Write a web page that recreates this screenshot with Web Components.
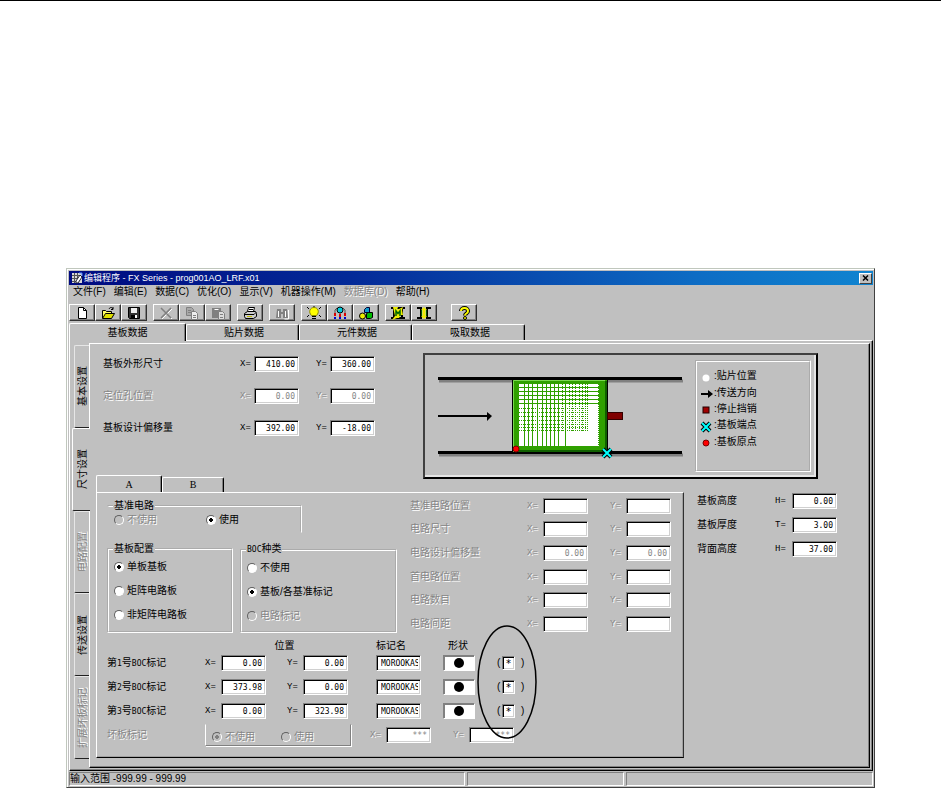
<!DOCTYPE html>
<html lang="zh-CN">
<head>
<meta charset="utf-8">
<title>编辑程序 - FX Series</title>
<style>
  :root {
    --face: #c0c0c0; --dim: #868686; --dark: #404040;
    --text-font: "Liberation Sans", "Noto Sans CJK SC", sans-serif;
    --mono-font: "DejaVu Sans Mono", monospace;
  }
  body { margin: 0; background: #fff; color: #000; font: 10px/12px var(--text-font); }
</style>
</head>
<body>
<manual-page>
  <app-window caption="编辑程序 - FX Series - prog001AO_LRF.x01">
    <menu-bar slot="menu" items="文件(F)|编辑(E)|数据(C)|优化(O)|显示(V)|机器操作(M)|!数据库(D)|帮助(H)"></menu-bar>
    <tool-bar slot="tools"></tool-bar>
    <tab-strip slot="tabs" items="基板数据|贴片数据|元件数据|吸取数据"></tab-strip>
    <side-tabs slot="side" items="基本设置|尺寸设置|!电路配置|传送设置|!扩展坏板标记"></side-tabs>
    <size-panel>
      <xy-rows slot="outline" rows="基板外形尺寸,410.00,360.00|!定位孔位置,0.00,0.00|基板设计偏移量,392.00,-18.00"></xy-rows>
      <board-diagram slot="diagram"></board-diagram>
      <tab-strip slot="subtabs" small items="A|B"></tab-strip>
      <circuit-sheet slot="sheet">
        <group-box slot="base" caption="基准电路" open><radio-set row name="基准电路" options="!不使用|*使用"></radio-set></group-box>
        <group-box slot="layout" caption="基板配置"><radio-set name="基板配置" options="*单板基板|矩阵电路板|非矩阵电路板"></radio-set></group-box>
        <group-box slot="boc" caption="BOC种类"><radio-set name="BOC种类" options="不使用|*基板/各基准标记|!电路标记"></radio-set></group-box>
        <xy-rows slot="circuit" tight rows="!基准电路位置,,|!电路尺寸,,|!电路设计偏移量,0.00,0.00|!首电路位置,,|!电路数目,,|!电路间距,,"></xy-rows>
        <mark-table slot="marks"></mark-table>
      </circuit-sheet>
      <height-list slot="heights"></height-list>
    </size-panel>
    <status-bar slot="status">输入范围 -999.99 - 999.99</status-bar>
  </app-window>
</manual-page>

<script>
const parse = s => s.split('|').map(t => {
  const off = t[0] === '!', on = t[0] === '*';
  return { off, on, text: off || on ? t.slice(1) : t };
});
const narrow = t => t.replace(/\w+/g, '<small>$&</small>');
const BASE = `<style>
  :host, *, *::before, *::after { box-sizing: border-box; }
  button, input { font: inherit; color: inherit; margin: 0; }
  button { background: none; border: 0; padding: 0; white-space: nowrap; }
  small { font-family: var(--mono-font); font-size: 8px; }
  .off { color: var(--dim); text-shadow: 1px 1px 0 #fff; }
</style>`;
function define(name, render) {
  customElements.define(name, class extends HTMLElement {
    constructor() { super(); this.attachShadow({ mode: 'open' }); }
    connectedCallback() { this.shadowRoot.innerHTML = BASE + render(this); }
  });
}

define('manual-page', () => `<style>
  :host { display: block; border-top: 1px solid #000; padding: 267px 66px 0; }
</style><slot></slot>`);

define('app-window', el => `<style>
  :host { display: block; background: var(--face); border: 1px solid; border-color: #c0c7bd var(--dark) var(--dark) #c0c7bd;
    box-shadow: inset 1px 1px 0 #fff; padding: 2px 1px 1px 2px; }
  header { display: flex; align-items: center; height: 14px; padding: 0 1px 0 2px; color: #fff; gap: 1px;
    background: linear-gradient(90deg, #000a80, #042a98 35%, #0d6cc4 78%, #1084d0); }
  h1 { flex: 1; margin: 0; font-weight: 400; font-size: 9px; line-height: 14px; white-space: nowrap; }
  header svg { display: block; }
  header button { width: 13px; height: 11px; background: var(--face); border: 1px solid; border-color: #fff #404040 #404040 #fff; display: grid; place-items: center; }
  .body { border: 1px solid; border-color: #fff #000 #000 #fff; box-shadow: inset -1px -1px 0 #808080;
    padding: 2px 2px 2px 0; display: flex; }
  main { flex: 1; min-width: 0; }
</style>
<header>
  <svg width="12" height="12" viewBox="0 0 12 12"><rect x="1" y="1" width="10" height="10" fill="#d8d8d8"/><path d="M1 3.500h8M1 6.500h8M1 9.500h5M3.500 1v10M6.500 1v9" stroke="#555"/><path d="M9 3l2 2-4 6H5V9z" fill="#fff" stroke="#223"/><path d="M8 1h3v3" stroke="#58f" fill="none"/></svg>
  <h1>${el.getAttribute('caption')}</h1>
  <button aria-label="关闭"><svg width="7" height="6" viewBox="0 0 7 6"><path d="M1 .5l5 5M6 .5l-5 5" stroke="#000" stroke-width="1.500"/></svg></button>
</header>
<slot name="menu"></slot><slot name="tools"></slot><slot name="tabs"></slot>
<div class="body"><slot name="side"></slot><main><slot></slot></main></div>
<slot name="status"></slot>`);

define('menu-bar', el => `<style>
  :host { display: block; }
  nav { display: flex; height: 14px; padding-left: 4px; gap: 8px; }
</style><nav>${parse(el.getAttribute('items')).map(i => `<button class="${i.off ? 'off' : ''}" ${i.off ? 'disabled' : ''}>${i.text}</button>`).join('')}</nav>`);

const ICONS = {
  新建: '<path d="M4.500 1.500h5l3 3v8h-8z" fill="#fff" stroke="#000"/><path d="M9.500 1.500v3h3" fill="none" stroke="#000"/>',
  打开: '<path d="M2.500 12V4.500h3l1 1h5V8" fill="#ff6" stroke="#000"/><path d="M2.500 12.500l3-5h9l-3 5z" fill="#e0e000" stroke="#000"/><path d="M9 3c1-2 3-2 4 0m0-2v2.500h-2" fill="none" stroke="#000"/>',
  保存: '<path d="M2.500 1.500h11v11h-10l-1-1z" fill="#333" stroke="#000"/><rect x="5" y="2" width="6" height="5" fill="#eee"/><rect x="5" y="9" width="6" height="3" fill="#000"/><rect x="9" y="9" width="2" height="3" fill="#fff"/>',
  '!删除': '<path d="M4 3l10 10M14 3L4 13" stroke="#fff"/><path d="M3 2l10 10M13 2L3 12" stroke="#808080" stroke-width="1.500"/>',
  '!复制': '<path d="M2.500 1.500h5l2 2v6h-7z" fill="#a8a8a8" stroke="#808080"/><path d="M7.500 5.500h4l2 2v6h-6z" fill="#eee" stroke="#808080"/><path d="M4 4.500h3M4 6.500h3M9 9.500h3M9 11.500h3" stroke="#808080"/>',
  '!粘贴': '<path d="M2 2h9v10H2z" fill="#808080"/><path d="M4.500 3.500h4" stroke="#fff"/><path d="M8.500 5.500h4l2 2v6h-6z" fill="#ddd" stroke="#808080"/><path d="M10 8.500h3M10 11.500h3" stroke="#808080"/>',
  打印: '<path d="M5.500 5.500l1-4h6l-1 4" fill="#fff" stroke="#000"/><path d="M2.500 7.500l3-2h8l1 2v3l-3 2h-8l-1-2z" fill="#ccc" stroke="#000"/><path d="M3 8.500h9l2-2M7 3.500h4" fill="none" stroke="#000"/><path d="M5 10.500h5" stroke="#bb0"/>',
  '!查找': '<path d="M3 3h4v3h2V3h4l1 9H9V8H7v4H2z" fill="#808080"/><path d="M4.500 5v6M11.500 5v6M14.500 4v9h-4" fill="none" stroke="#fff"/>',
  提示: '<path d="M1 1l2 2M8 0v1M15 1l-2 2M1 11l2-2M15 11l-2-2" stroke="#000"/><path d="M5.500 9.500C2 6 4 1.500 8 1.500S14 6 10.500 9.500z" fill="#ff0" stroke="#880"/><path d="M6 10.500h4M6 12.500h4" stroke="#000"/>',
  吸嘴: '<circle cx="8" cy="4" r="3" fill="#0cd" stroke="#000"/><path d="M3 8V4l2-2M13 8V4l-2-2M8 7v2" stroke="#555" fill="none"/><path d="M2 7h2v3H2zM7 8h2v3H7zM12 7h2v3h-2z" fill="#d00"/><path d="M2 11h2v2H2zM7 11h2v2H7zM12 11h2v2h-2z" fill="#00c"/>',
  元件: '<path d="M6.500 3.500l2-2h3v5h-5z" fill="#19c" stroke="#003"/><circle cx="4.500" cy="10" r="3" fill="#ee0" stroke="#000"/><path d="M8.500 7.500l2-1h4v5l-2 1h-4z" fill="#0b0" stroke="#000"/>',
  优化M: '<path d="M1 2h14M1 12h14M4 2v10M12 2v10" stroke="#000" stroke-width="2"/><path d="M3 1h5l-1 3 6-3-1 3 1 5h-2l-2 3H7l-5 2 3-4z" fill="#ee0"/><path d="M6 10V5l2 2.500L10 5v5" stroke="#060" stroke-width="1.500" fill="none"/>',
  优化I: '<path d="M1 2h4v10H1M15 2h-4v10h4" fill="none" stroke="#000" stroke-width="2"/><path d="M8 1l3 3H9.500v6H11l-3 3-3-3h1.500V4H5z" fill="#ee0"/><path d="M5.500 4v6M10.500 4v6" stroke="#050"/>',
  帮助: '<path d="M5 5c0-4 7-4 7 0 0 3-3 2-3 4.500" fill="none" stroke="#000" stroke-width="4"/><path d="M5 5c0-4 7-4 7 0 0 3-3 2-3 4.500" fill="none" stroke="#ff0" stroke-width="2"/><circle cx="9" cy="12" r="1.500" fill="#ff0" stroke="#000"/>'
};
define('tool-bar', () => {
  const groups = [['新建', '打开', '保存'], ['!删除', '!复制', '!粘贴'], ['打印'], ['!查找'], ['提示', '吸嘴', '元件'], ['优化M', '优化I'], ['帮助']];
  return `<style>
  :host { display: flex; gap: 6px; padding: 5px 0 2px; }
  div { display: flex; }
  div:last-of-type { margin-left: 8px; }
  button { width: 26px; height: 17px; display: grid; place-items: center; border: 1px solid; border-color: #fff #303030 #303030 #fff; box-shadow: inset -1px -1px 0 #808080; }
  svg { display: block; }
</style>${groups.map(g => `<div>${g.map(k => `<button aria-label="${k.replace('!', '')}" ${k[0] === '!' ? 'disabled' : ''}><svg width="16" height="14" viewBox="0 0 16 14">${ICONS[k]}</svg></button>`).join('')}</div>`).join('')}`;
});

define('tab-strip', el => `<style>
  :host { display: flex; align-items: flex-end; height: 17px; position: relative; }
  button { width: 113px; height: 16px; border: 1px solid; border-color: #fff #000 transparent #fff; border-bottom: 0; border-radius: 2px 2px 0 0; box-shadow: inset -1px 0 0 #808080; padding: 0 0 0 3px; }
  button[aria-selected=true] { width: 117px; height: 18px; margin-bottom: -1px; padding: 0; background: var(--face); }
  :host([small]) button { width: 62px; height: 15px; padding: 0; }
  :host([small]) button[aria-selected=true] { width: 66px; height: 18px; }
  :host([small]) { font-family: "Liberation Serif", serif; }
</style>${parse(el.getAttribute('items')).map((i, n) => `<button role="tab" aria-selected="${n === 0}">${i.text}</button>`).join('')}`);

define('side-tabs', el => `<style>
  :host { display: flex; flex-direction: column; flex: 0 0 19px; padding: 2px 0 9px 4px; }
  button { flex: 1 1 0; display: flex; align-items: center; justify-content: flex-end; border: 1px solid; border-color: #e6e6e6 transparent #202020 #e6e6e6; border-radius: 2px 0 0 2px; border-right: 0; }
  button[aria-selected=true] { margin: 0 -1px 0 -2px; padding-right: 1px; background: var(--face); border-top-color: #fff; border-left-color: #fff; position: relative; }
  span { writing-mode: vertical-rl; text-orientation: sideways; transform: rotate(180deg); line-height: 12px; }
</style>${parse(el.getAttribute('items')).map((i, n) => `<button role="tab" aria-selected="${n === 1}" class="${i.off ? 'off' : ''}" ${i.off ? 'disabled' : ''}><span>${i.text}</span></button>`).join('')}`);

define('size-panel', () => `<style>
  :host { display: block; border: 1px solid; border-color: #fff #000 #000 #fff; box-shadow: inset -1px -1px 0 #808080; padding: 4px 0 9px; }
  .top { display: flex; height: 127px; }
  ::slotted([slot=outline]) { margin-left: 13px; flex: 0 0 272px; }
  ::slotted([slot=diagram]) { flex: 1; margin: 5px 51px 0 48px; }
  .bottom { display: flex; }
  .left { flex: 1; min-width: 0; margin-left: 6px; }
  ::slotted([slot=heights]) { flex: 0 0 185px; }
</style>
<div class="top"><slot name="outline"></slot><slot name="diagram"></slot></div>
<div class="bottom"><div class="left"><slot name="subtabs"></slot><slot name="sheet"></slot></div><slot name="heights"></slot></div>`);

define('num-field', el => {
  const off = el.hasAttribute('off');
  const name = el.getAttribute('name');
  return `<style>
  :host { display: flex; align-items: center; }
  label { flex: 0 0 var(--lw, 16px); font-family: "Liberation Mono", monospace; font-size: 9px; }
  input { width: 45px; height: 16px; border: 1px solid; border-color: #808080 #fff #fff #808080; background: #fff; outline: 0; border-radius: 0;
    font-family: var(--mono-font); font-size: 8px;
    box-shadow: inset 1px 1px 0 #000, inset -1px -1px 0 #d0d0d0; padding: 0 3px; text-align: right; }
  input:disabled { color: #868686; -webkit-text-fill-color: #868686; }
  :host([left]) input { text-align: left; padding: 0 2px 0 4px; }
  :host([tiny]) input { width: 13px; height: 14px; padding: 0 1px; text-align: center; font-size: 10px; }
  :host([tiny]) label, :host([left]) label { display: none; }
</style><label for="f" class="${off ? 'off' : ''}">${name || ''}</label><input id="f" aria-label="${name || '标记'}" value="${el.getAttribute('value') || ''}" ${off ? 'disabled' : ''}>`;
});

define('xy-rows', el => `<style>
  :host { display: grid; grid-auto-rows: 32px; --lw: 14px; }
  :host([tight]) { grid-auto-rows: 1fr; height: 142px; --lw: 16px; }
  .row { display: grid; grid-template-columns: 1fr auto auto; column-gap: 17px; align-items: center; white-space: nowrap; }
  :host([tight]) .row { column-gap: 22px; }
</style>${el.getAttribute('rows').split('|').map(r => {
  const off = r[0] === '!';
  const [t, x, y] = r.replace('!', '').split(',');
  const o = off ? 'off' : '';
  return `<div class="row"><span class="${o}">${t}</span><num-field name="X=" value="${x}" ${o}></num-field><num-field name="Y=" value="${y}" ${o}></num-field></div>`;
}).join('')}`);

define('height-list', () => `<style>
  :host { display: block; padding: 14px 32px 0 13px; --lw: 17px; }
  div { display: flex; justify-content: space-between; align-items: center; height: 24px; }
</style>${[['基板高度', 'H=', '0.00'], ['基板厚度', 'T=', '3.00'], ['背面高度', 'H=', '37.00']].map(r => `<div><span>${r[0]}</span><num-field name="${r[1]}" value="${r[2]}"></num-field></div>`).join('')}`);

define('group-box', el => `<style>
  :host { display: block; }
  fieldset { margin: 0; border: 2px groove #fff; padding: 0 0 3px 5px; min-width: 0; height: 100%; }
  legend { padding: 0 1px; margin-left: -1px; line-height: 12px; }
  :host([open]) fieldset { border-left-color: transparent; border-bottom-color: transparent; padding-bottom: 4px; }
</style><fieldset><legend>${narrow(el.getAttribute('caption'))}</legend><slot></slot></fieldset>`);

define('radio-set', el => {
  const name = el.getAttribute('name');
  return `<style>
  :host { display: grid; grid-auto-rows: 24px; }
  :host([row]) { grid-template-columns: var(--first, 92px) 1fr; grid-auto-rows: 15px; }
  label { display: flex; align-items: center; gap: 3px; white-space: nowrap; }
  input { appearance: none; width: 10px; height: 10px; border-radius: 50%; border: 1px solid; border-color: #606060 #fff #fff #606060; background: #fff; }
  input:disabled { background: var(--face); }
  input:checked { background: radial-gradient(circle, #000 2px, #fff 2px); }
  input:checked:disabled { background: radial-gradient(circle, #808080 2px, #c0c0c0 2px); }
</style>${parse(el.getAttribute('options')).map(o => {
    const off = o.off || el.hasAttribute('off');
    return `<label class="${off ? 'off' : ''}"><input type="radio" name="${name}" ${o.on ? 'checked' : ''} ${off ? 'disabled' : ''}>${o.text}</label>`;
  }).join('')}`;
});

define('circuit-sheet', () => `<style>
  :host { display: block; position: relative; border: 1px solid; border-color: #fff #303030 #000 #fff; box-shadow: inset -1px -1px 0 #a0a0a0; padding: 1px 12px 10px 10px; }
  .upper { display: flex; gap: 13px; }
  .groups { flex: 0 0 290px; padding-top: 6px; }
  .pair { display: flex; gap: 7px; margin-top: 10px; }
  ::slotted([slot=base]) { width: 195px; }
  ::slotted([slot=layout]) { flex: 126; }
  ::slotted([slot=boc]) { flex: 157; }
  ::slotted([slot=circuit]) { flex: 1; }
  .ring { position: absolute; left: 380px; top: 131px; }
</style>
<div class="upper"><div class="groups"><slot name="base"></slot><div class="pair"><slot name="layout"></slot><slot name="boc"></slot></div></div><slot name="circuit"></slot></div>
<slot name="marks"></slot>
<svg class="ring" width="60" height="116" viewBox="0 0 60 116"><ellipse cx="30" cy="58" rx="29" ry="56" fill="none" stroke="#000" stroke-width="1.500"/></svg>`);

define('mark-table', () => `<style>
  :host { display: block; }
  .head, .row { display: grid; align-items: center; white-space: nowrap;
    grid-template-columns: 98px 61px 21px 61px 28px 45px 22px 32px 22px 5px 13px 6px auto; }
  .head { height: 15px; padding-top: 4px; }
  .row { height: 24px; }
  .bad { grid-template-columns: 98px 146px 19px 61px 22px 61px; }
  .pos { grid-column: 2 / 5; text-align: center; padding-left: 16px; }
  .nm { grid-column: 6; } .sh { grid-column: 8; padding-left: 5px; }
  .x { grid-column: 2; } .y { grid-column: 4; } .n { grid-column: 6; }
  .s { grid-column: 8; width: 32px; height: 16px; background: #fff; border: 1px solid; border-color: #808080 #fff #fff #808080; box-shadow: inset 1px 1px 0 #808080; display: grid; place-items: center; }
  .s::before { content: ""; width: 10px; height: 10px; border-radius: 50%; background: #000; }
  .p { grid-column: 10; } .t { grid-column: 11; } .q { grid-column: 13; }
  .box { border: 1px solid; border-color: transparent #808080 #808080 #fff; box-shadow: 1px 1px 0 #fff; height: 22px; padding: 4px 0 0 6px; --first: 69px; }
</style>
<div class="head"><span class="pos">位置</span><span class="nm">标记名</span><span class="sh">形状</span></div>
${[['1', '0.00', '0.00'], ['2', '373.98', '0.00'], ['3', '0.00', '323.98']].map(r => `<div class="row"><span>${narrow(`第${r[0]}号`)}${narrow('BOC')}标记</span>
<num-field class="x" name="X=" value="${r[1]}"></num-field><num-field class="y" name="Y=" value="${r[2]}"></num-field>
<num-field class="n" left value="MOROOKAS"></num-field><button class="s" aria-label="圆形"></button>
<span class="p">(</span><num-field class="t" tiny value="*"></num-field><span class="q">)</span></div>`).join('')}
<div class="row bad"><span class="off">坏板标记</span><div class="box"><radio-set row off name="坏板标记" options="*不使用|使用"></radio-set></div>
<num-field style="grid-column:4" name="X=" value="***" off></num-field><num-field style="grid-column:6" name="Y=" value="***" off></num-field></div>`);

const CROSS = (x, y) => `<path d="M${x - 4} ${y - 4}l8 8m0-8l-8 8" stroke="#000" stroke-width="4"/><path d="M${x - 4} ${y - 4}l8 8m0-8l-8 8" stroke="#0ff" stroke-width="2"/>`;
function placements() {
  let solid = '', dash = '';
  for (const x of [99, 103, 107, 112, 117, 121, 125, 129, 133, 140]) solid += `M${x}.5 29v62`;
  for (const y of [32, 36, 40, 44, 48]) solid += `M94 ${y}.5h80`;
  for (const y of [53, 57, 61, 65, 69, 72, 75]) dash += `M94 ${y}.5h68`;
  for (const x of [137, 144, 147, 150, 154, 157, 160, 162]) dash += `M${x}.5 29v48`;
  return `<rect x="94" y="29" width="80" height="62" fill="#fff"/><path d="${solid}" stroke="#30a000"/><path d="${dash}" stroke="#30a000" stroke-dasharray="1 1"/><path d="M173.500 29v62" stroke="#30a000" stroke-dasharray="1 1"/>`;
}
define('board-diagram', () => `<style>
  :host { display: flex; align-items: flex-start; height: 126px; border: 2px solid; border-color: #404040 #000 #000 #404040; box-shadow: inset -2px -2px 0 #e4e4e4; padding: 5px 5px 5px 0; }
  .map { flex: 1; min-width: 0; height: 122px; margin-top: -5px; }
  ul { flex: 0 0 116px; height: 112px; margin: 0; list-style: none; border: 2px groove #fff; padding: 6px 0 20px 3px; display: grid; grid-auto-rows: 1fr; }
  li { display: flex; align-items: center; }
  li svg { flex: 0 0 14px; height: 12px; margin-top: 3px; }
</style>
<svg class="map" viewBox="0 0 269 122" preserveAspectRatio="xMinYMin meet">
  <path d="M14 26h244M14 100h244" stroke="#808080" stroke-width="3"/>
  <path d="M13 23.500h244M13 97.500h244" stroke="#000" stroke-width="3"/>
  <path d="M13 61h52" stroke="#000" stroke-width="2"/><path d="M62 57l5 4-5 5z"/>
  <rect x="87.500" y="24.500" width="95" height="73" fill="#30a000" stroke="#000"/>
  <path d="M88.500 97V25.500H180" fill="none" stroke="#7ad850"/><path d="M181 26v70H89" fill="none" stroke="#106000" stroke-width="2"/>
  ${placements()}
  <rect x="182.500" y="57.500" width="15" height="7" fill="#800000" stroke="#300"/>
  <circle cx="91" cy="94" r="3" fill="red" stroke="#700"/>
  ${CROSS(182, 98)}
</svg>
<ul>
  <li><svg viewBox="0 0 14 12"><circle cx="6" cy="6" r="3.500" fill="#fff"/></svg>:贴片位置</li>
  <li><svg viewBox="0 0 14 12"><path d="M1 6h9" stroke="#000" stroke-width="2"/><path d="M8 2l5 4-5 4z"/></svg>:传送方向</li>
  <li><svg viewBox="0 0 14 12"><rect x="3" y="3" width="6" height="6" fill="#a00000" stroke="#200"/></svg>:停止挡销</li>
  <li><svg viewBox="0 0 14 12">${CROSS(6, 6)}</svg>:基板端点</li>
  <li><svg viewBox="0 0 14 12"><circle cx="6" cy="6" r="3" fill="red" stroke="#700"/></svg>:基板原点</li>
</ul>`);

define('status-bar', () => `<style>
  :host { display: grid; grid-template-columns: 396px 157px 1fr; gap: 2px; height: 15px; padding-top: 1px; }
  div { border: 1px solid; border-color: #808080 #fff #fff #808080; line-height: 12px; white-space: nowrap; }
  div:first-child { border-left: 0; }
</style><div><slot></slot></div><div></div><div></div>`);
</script>
</body>
</html>
